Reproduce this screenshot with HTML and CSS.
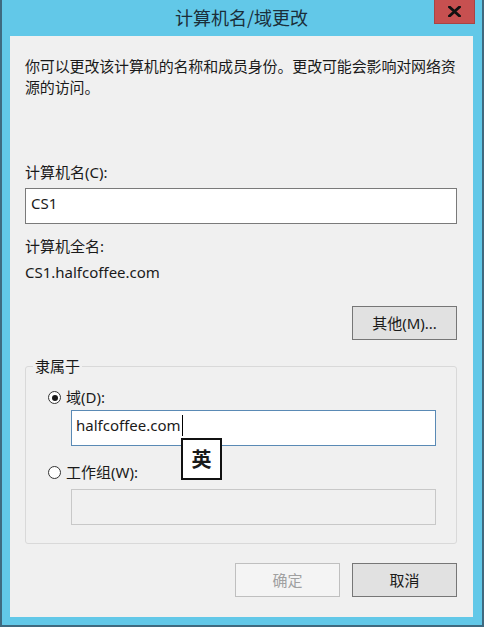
FILE: index.html
```html
<!DOCTYPE html>
<html lang="zh-CN">
<head>
<meta charset="utf-8">
<title>计算机名/域更改</title>
<link rel="stylesheet" href="styles.css">
</head>
<body>
<div class="window">
  <div class="titlebar">
    <span></span>
    <div class="title">计算机名/域更改</div>
    <div class="close">
      <svg width="13" height="11" viewBox="0 0 13 11"><path d="M1.5 1 L11.5 10 M11.5 1 L1.5 10" stroke="#111" stroke-width="2.8" stroke-linecap="square"/></svg>
    </div>
  </div>
  <div class="client">
    <p class="desc">你可以更改该计算机的名称和成员身份。更改可能会影响对网络资<br>源的访问。</p>
    <div class="label label-name">计算机名(C):</div>
    <div class="input"><span>CS1</span></div>
    <div class="label label-full">计算机全名:</div>
    <div class="label label-value">CS1.halfcoffee.com</div>
    <div class="row-right row-other">
      <div class="btn">其他(M)...</div>
    </div>
    <fieldset class="group">
      <legend>隶属于</legend>
      <div class="group-body">
        <div class="radio radio-domain"><span class="dot checked"></span><span>域(D):</span></div>
        <div class="input input-domain"><span>halfcoffee.com</span><span class="caret"></span>
          <div class="ime">英</div>
        </div>
        <div class="radio radio-wg"><span class="dot"></span><span>工作组(W):</span></div>
        <div class="input input-disabled"></div>
      </div>
    </fieldset>
    <div class="row-right row-actions">
      <div class="btn btn-disabled">确定</div>
      <div class="btn">取消</div>
    </div>
  </div>
</div>
</body>
</html>
```

FILE: styles.css
```css
* { box-sizing: border-box; }
html, body { margin: 0; padding: 0; background: #ffffff; }
body {
  font-family: "Noto Sans", "Noto Sans CJK SC", sans-serif;
  font-size: 15px;
  color: #1a1a1a;
}
.window {
  width: 484px;
  height: 627px;
  background: #62c8e8;
  border-left: 2px solid #3f6a80;
  border-right: 2px solid #3f6a80;
  border-bottom: 2px solid #3f6a80;
  padding: 0 9px 8px 8px;
  display: flex;
  flex-direction: column;
}
.titlebar {
  height: 36px;
  display: grid;
  grid-template-columns: 1fr auto 1fr;
}
.title {
  font-family: "Noto Sans CJK SC", "Noto Sans", sans-serif;
  font-size: 18px;
  line-height: 36px;
  color: #1b2f3a;
  margin-top: -1px;
}
.close {
  justify-self: end;
  width: 41px;
  height: 24px;
  margin-right: -2px;
  background: #c75050;
  border: 1px solid #a84444;
  border-top: none;
  display: flex;
  align-items: center;
  justify-content: center;
}
.client {
  flex: 1;
  background: #f0f0f0;
  padding: 20px 16px 20px 15px;
  display: flex;
  flex-direction: column;
}
.desc {
  margin: 0;
  line-height: 21px;
  white-space: nowrap;
  letter-spacing: -0.15px;
}
.label { line-height: 21px; }
.label-name { margin-top: 64px; }
.label-full { margin-top: 12px; }
.label-value { margin-top: 5px; }
.input {
  height: 36px;
  margin-top: 5px;
  background: #ffffff;
  border: 1px solid #7a7a7a;
  padding: 0 5px;
  display: flex;
  align-items: center;
  line-height: 21px;
  padding-bottom: 5px;
  position: relative;
}
.row-right { display: flex; justify-content: flex-end; gap: 12px; }
.row-other { margin-top: 23px; }
.btn {
  width: 105px;
  height: 34px;
  background: #e1e1e1;
  border: 1px solid #767676;
  display: flex;
  align-items: center;
  justify-content: center;
  line-height: 21px;
}
.btn-disabled {
  background: #f4f4f4;
  border-color: #bfbfbf;
  color: #a0a0a0;
}
.group {
  margin: 16px 0 0 0;
  padding: 0;
  border: 1px solid #d9d9d9;
  border-radius: 3px;
  min-width: 0;
}
.group legend {
  padding: 0 2px;
  margin-left: 7px;
  line-height: 21px;
}
.group-body {
  padding: 0 20px 18px 22px;
}
.radio {
  display: flex;
  align-items: center;
  gap: 5px;
  line-height: 21px;
}
.radio-domain { margin-top: 10px; }
.radio-wg { margin-top: 16px; }
.dot {
  width: 13px;
  height: 13px;
  border-radius: 50%;
  border: 1px solid #333333;
  background: #ffffff;
  display: flex;
  align-items: center;
  justify-content: center;
}
.dot.checked::after {
  content: "";
  width: 6px;
  height: 6px;
  border-radius: 50%;
  background: #1a1a1a;
}
.input-domain {
  margin-top: 2px;
  margin-left: 23px;
  border-color: #5a8ab5;
  padding-left: 4px;
}
.caret {
  width: 1px;
  height: 21px;
  background: #000000;
  margin-left: 1px;
}
.ime {
  position: absolute;
  left: 109px;
  top: 27px;
  width: 41px;
  height: 42px;
  background: #ffffff;
  border: 2px solid #111111;
  display: flex;
  align-items: center;
  justify-content: center;
  font-family: "Noto Sans CJK SC", sans-serif;
  font-weight: 700;
  font-size: 20px;
  line-height: 1;
  z-index: 2;
}
.input-disabled {
  margin-top: 6px;
  margin-left: 23px;
  background: #f0f0f0;
  border-color: #c8c8c8;
}
.row-actions { margin-top: 19px; }
```
